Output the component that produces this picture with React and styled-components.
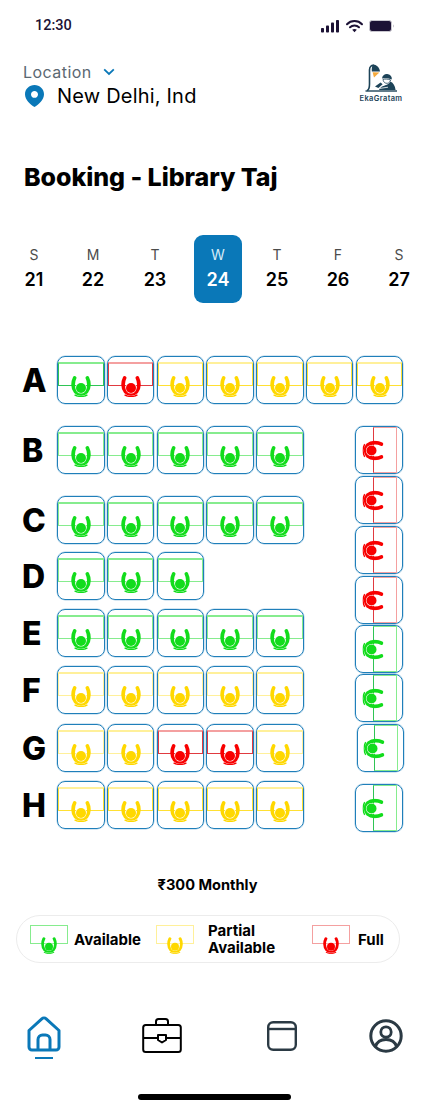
import React from 'react';
import styled, { createGlobalStyle } from 'styled-components';

const BLUE = '#0a78b8';

const COLORS = {
  green: { fill: '#12dc1c', strong: '#2fc455', light: '#86ec8e' },
  yellow: { fill: '#ffd800', strong: '#ffe033', light: '#fff09a' },
  red: { fill: '#f80000', strong: '#e03a40', light: '#f4a0a0' },
};

const GlobalStyle = createGlobalStyle`
  html, body {
    margin: 0;
    padding: 0;
    background: #fff;
  }
  body {
    font-family: 'Inter', 'Noto Sans', sans-serif;
    color: #000;
  }
`;

const Screen = styled.div`
  width: 430px;
  height: 1106px;
  overflow: hidden;
  display: flex;
  flex-direction: column;
  background: #fff;
`;

const StatusBar = styled.div`
  height: 50px;
  flex: none;
  display: flex;
  align-items: center;
  justify-content: space-between;
  padding: 1px 36px 0 35px;
  box-sizing: border-box;
`;

const Clock = styled.span`
  font-family: 'Roboto', sans-serif;
  font-size: 14.5px;
  font-weight: 500;
  color: #1c1235;
`;

const StatusIcons = styled.svg`
  display: block;
`;

const LocationHeader = styled.header`
  margin-top: 12px;
  padding: 0 27px 0 23px;
  display: flex;
  justify-content: space-between;
  align-items: flex-start;
`;

const LocationLabel = styled.div`
  height: 20px;
  display: flex;
  align-items: center;
  gap: 11px;
  font-size: 16px;
  letter-spacing: 0.45px;
  color: #5b6872;
`;

const LocationValue = styled.div`
  height: 28px;
  display: flex;
  align-items: center;
  gap: 13px;
  font-size: 20px;
  letter-spacing: 0.2px;
  margin-left: 2px;
`;

const Brand = styled.div`
  margin-top: 2px;
  width: 44px;
  display: flex;
  flex-direction: column;
  align-items: center;
`;

const BrandName = styled.span`
  font-size: 7.5px;
  font-weight: 600;
  letter-spacing: 0.35px;
  color: #1d4358;
  white-space: nowrap;
  margin-top: 2px;
`;

const Title = styled.h1`
  margin: 50px 0 0 24px;
  height: 34px;
  line-height: 34px;
  font-size: 25px;
  font-weight: 800;
  letter-spacing: -0.05px;
`;

const Calendar = styled.div`
  margin: 41px 0 0 3.5px;
  display: grid;
  grid-template-columns: 61px 57px 67px 59px 59px 63px 59px;
`;

const Day = styled.div`
  justify-self: center;
  width: 48px;
  height: 68px;
  border-radius: 9px;
  background: ${({ $active }) => ($active ? BLUE : 'transparent')};
  color: ${({ $active }) => ($active ? '#fff' : '#000')};
  display: flex;
  flex-direction: column;
  align-items: center;
  padding-top: 11px;
  box-sizing: border-box;
`;

const DayName = styled.span`
  font-size: 14px;
  line-height: 18px;
  color: ${({ $active }) => ($active ? '#d6ebf7' : '#4c4c4c')};
`;

const DayNumber = styled.span`
  font-size: 18px;
  line-height: 26px;
  margin-top: 3px;
  font-weight: 600;
`;

const SeatMap = styled.section`
  margin-top: 53px;
  padding-left: 22px;
  display: flex;
  flex-direction: column;
`;

const SeatRow = styled.div`
  display: flex;
  align-items: center;
  margin-top: ${({ $top }) => $top || 0}px;
`;

const RowLetter = styled.span`
  width: 35px;
  flex: none;
  font-size: 32px;
  line-height: 40px;
  font-weight: 800;
  padding-top: 2px;
`;

const Seats = styled.div`
  display: flex;
  gap: 2.3px;
`;

const LowerMap = styled.div`
  margin-top: 22px;
  display: flex;
`;

const LeftRows = styled.div`
  width: 333px;
  flex: none;
`;

const SideSeats = styled.div`
  display: flex;
  flex-direction: column;
`;

const SideSlot = styled.div`
  margin-top: ${({ $top }) => $top || 0}px;
  margin-left: ${({ $shift }) => $shift || 0}px;
`;

const SeatBox = styled.div`
  width: 47.5px;
  height: 48px;
  box-sizing: border-box;
  border: 1px solid #1f7fba;
  box-shadow: 0 0 0 0.5px rgba(42, 133, 189, 0.4);
  border-radius: 8px;
  display: flex;
  flex-direction: ${({ $side }) => ($side ? 'row' : 'column')};
  align-items: center;
  justify-content: ${({ $side }) => ($side ? 'flex-end' : 'flex-start')};
  padding: ${({ $side }) => ($side ? '0 5px 0 0' : '5px 0 0')};
`;

const Desk = styled.div`
  flex: none;
  box-sizing: border-box;
  border: 1px solid ${({ $color }) => $color.light};
  ${({ $legend, $side, $strong, $color }) => {
    if ($legend) return 'width: 38px; height: 19px;';
    if ($side) {
      return `width: 24px; height: 46px; border-left: 1px solid ${$color.strong};`;
    }
    return `
      width: 100%;
      height: 24px;
      border-top-width: 2px;
      ${$strong ? `border-color: ${$color.light} ${$color.strong} ${$color.strong};` : ''}
    `;
  }}
`;

const PersonSvg = styled.svg`
  flex: none;
  display: block;
  position: relative;
  z-index: 1;
  transform: ${({ $side }) => ($side ? 'rotate(90deg)' : 'none')};
  margin: ${({ $side }) => ($side ? '0 -10px 0 0' : '-10px 0 0')};
`;

const LegendPerson = styled(PersonSvg)`
  margin: -7px 0 0 11px;
`;

const Price = styled.div`
  margin-top: 43px;
  height: 20px;
  line-height: 20px;
  text-align: center;
  padding-right: 15px;
  font-size: 14.6px;
  font-weight: 700;
`;

const Legend = styled.div`
  margin: 20px 0 0 16px;
  width: 384px;
  height: 48px;
  box-sizing: border-box;
  border: 1px solid #ececec;
  border-radius: 24px;
  display: flex;
  align-items: flex-start;
`;

const LegendItem = styled.div`
  margin-left: ${({ $left }) => $left}px;
  margin-top: 9px;
  flex: none;
`;

const LegendLabel = styled.span`
  flex: none;
  margin-left: ${({ $left }) => $left}px;
  margin-top: ${({ $top }) => $top}px;
  font-size: 15px;
  line-height: 17px;
  font-weight: 700;
`;

const BottomNav = styled.nav`
  margin-top: 53px;
  height: 44px;
  padding-left: 27px;
  display: flex;
  align-items: flex-start;
`;

const NavButton = styled.div`
  flex: none;
  margin-left: ${({ $left }) => $left || 0}px;
  margin-top: ${({ $top }) => $top || 0}px;
  display: flex;
  flex-direction: column;
  align-items: center;
`;

const NavIcon = styled.svg`
  display: block;
`;

const ActiveMark = styled.span`
  width: 18px;
  height: 2px;
  margin-top: 5px;
  background: ${BLUE};
`;

const HomeBar = styled.div`
  width: 153px;
  height: 6px;
  margin: 34px 0 0 138px;
  border-radius: 3px;
  background: #000;
`;

const Person = ({ status, side, legend }) => {
  const color = COLORS[status].fill;
  const Svg = legend ? LegendPerson : PersonSvg;
  return (
    <Svg
      $side={side}
      width={legend ? 16 : 20}
      height={legend ? 17 : 21}
      viewBox="0 0 20 21"
      fill="none"
    >
      <path
        d="M3.6 2C1.6 6 1.4 12 4.4 15.6C7.4 18.6 12.6 18.6 15.6 15.6C18.6 12 18.4 6 16.4 2"
        stroke={color}
        strokeWidth="3.7"
        strokeLinecap="round"
      />
      <circle cx="10" cy="12" r="5.5" fill="#fff" />
      <circle cx="10" cy="12" r="5" fill={color} />
      <path d="M3.6 18.8C7.2 21 12.8 21 16.4 18.8" stroke={color} strokeWidth="1.4" />
    </Svg>
  );
};

const Seat = ({ status, side, strong }) => (
  <SeatBox $side={side}>
    {side && <Person status={status} side />}
    <Desk $color={COLORS[status]} $side={side} $strong={strong} />
    {!side && <Person status={status} />}
  </SeatBox>
);

const g = 'green';
const y = 'yellow';
const r = 'red';

const ROWS = [
  { letter: 'B', top: 0, seats: [g, g, g, g, g] },
  { letter: 'C', top: 22, seats: [g, g, g, g, g] },
  { letter: 'D', top: 8, seats: [g, g, g] },
  { letter: 'E', top: 9, seats: [g, g, g, g, g] },
  { letter: 'F', top: 9, seats: [y, y, y, y, y] },
  { letter: 'G', top: 10, seats: [y, y, r, r, y], strong: [2, 3] },
  { letter: 'H', top: 9, seats: [y, y, y, y, y], strong: [0, 1, 2, 3, 4] },
];

const SIDE = [
  { status: r, top: 0 },
  { status: r, top: 2 },
  { status: r, top: 2 },
  { status: r, top: 2 },
  { status: g, top: 1 },
  { status: g, top: 1 },
  { status: g, top: 2, shift: 1.5 },
  { status: g, top: 12 },
];

const DAYS = [
  ['S', 21],
  ['M', 22],
  ['T', 23],
  ['W', 24],
  ['T', 25],
  ['F', 26],
  ['S', 27],
];

const Logo = () => (
  <svg width="33" height="28" viewBox="0 0 33 28" fill="none">
    <path d="M2 26.5C4 26 4.5 24 4.5 20V6C4.5 2.5 6.5 1 9 1.5" stroke="#1d4358" strokeWidth="1.6" />
    <path d="M8 0.6C11.5 0.8 14.5 3.6 15 7.6L6.8 7.4C6.6 4.6 7 2 8 0.6Z" fill="#1d4358" />
    <path d="M7.6 8.2L14.4 8.4L9 13.4Z" fill="#f5a93c" />
    <path d="M17 14.4C17.4 11.2 20 9.6 23 10.2C26 11 27.4 13.4 26.6 15.6C24 14 20 14 17 14.4Z" fill="#1d4358" />
    <path d="M18 15.4C20 14.8 23.6 15 25.6 16C25 18.6 22.8 19.8 20.8 19.2C19.2 18.8 18.2 17.2 18 15.4Z" fill="#fff" stroke="#1d4358" strokeWidth="0.8" />
    <path d="M25.4 17.6C28.4 19 30 22 30.6 26H14C15 24 16.4 22.6 18.4 22C20.6 21.4 24.2 20.4 25.4 17.6Z" fill="#1d4358" />
    <path d="M10 22.6L15.6 18.6L17.6 20.2L13.4 24Z" fill="#1d4358" />
    <path d="M0.5 27H32" stroke="#1d4358" strokeWidth="1.4" />
    <path d="M15 24.4L23 23.2" stroke="#fff" strokeWidth="0.8" />
  </svg>
);

export default function App() {
  return (
    <Screen>
      <GlobalStyle />
      <StatusBar>
        <Clock>12:30</Clock>
        <StatusIcons width="73" height="14" viewBox="0 0 73 14" fill="none">
          <rect x="0" y="9" width="3" height="4.5" rx="0.8" fill="#1c1235" />
          <rect x="5" y="6.5" width="3" height="7" rx="0.8" fill="#1c1235" />
          <rect x="10" y="3.5" width="3" height="10" rx="0.8" fill="#1c1235" />
          <rect x="15" y="1" width="3" height="12.5" rx="0.8" fill="#1c1235" />
          <path d="M26 5.2C30 1 37 1 41 5.2" stroke="#1c1235" strokeWidth="2" strokeLinecap="round" />
          <path d="M29 8.2C31.4 5.8 35.6 5.8 38 8.2" stroke="#1c1235" strokeWidth="2" strokeLinecap="round" />
          <path d="M33.5 13.2L31.2 10.8C32.4 9.8 34.6 9.8 35.8 10.8Z" fill="#1c1235" />
          <rect x="48.5" y="1.5" width="22" height="11" rx="2.5" fill="#1c1235" stroke="#c9c7cf" />
          <path d="M72 5.5C72.8 5.8 73 6.4 73 7C73 7.6 72.8 8.2 72 8.5Z" fill="#c9c7cf" />
        </StatusIcons>
      </StatusBar>

      <LocationHeader>
        <div>
          <LocationLabel>
            Location
            <svg width="12" height="8" viewBox="0 0 12 8" fill="none">
              <path d="M1.2 1.4L6 6L10.8 1.4" stroke={BLUE} strokeWidth="1.8" />
            </svg>
          </LocationLabel>
          <LocationValue>
            <svg width="19" height="22" viewBox="0 0 19 22" fill="none">
              <path
                fillRule="evenodd"
                clipRule="evenodd"
                d="M9.5 0C14.7 0 19 4 19 9.2C19 14.6 13.8 19.6 9.5 22C5.2 19.6 0 14.6 0 9.2C0 4 4.3 0 9.5 0ZM9.5 6C7.6 6 6 7.5 6 9.4C6 11.3 7.6 12.8 9.5 12.8C11.4 12.8 13 11.3 13 9.4C13 7.5 11.4 6 9.5 6Z"
                fill={BLUE}
              />
            </svg>
            New Delhi, Ind
          </LocationValue>
        </div>
        <Brand>
          <Logo />
          <BrandName>EkaGratam</BrandName>
        </Brand>
      </LocationHeader>

      <Title>Booking - Library Taj</Title>

      <Calendar>
        {DAYS.map(([name, num]) => (
          <Day key={num} $active={num === 24}>
            <DayName $active={num === 24}>{name}</DayName>
            <DayNumber>{num}</DayNumber>
          </Day>
        ))}
      </Calendar>

      <SeatMap>
        <SeatRow>
          <RowLetter>A</RowLetter>
          <Seats>
            {[g, r, y, y, y, y, y].map((status, i) => (
              <Seat key={i} status={status} strong />
            ))}
          </Seats>
        </SeatRow>
        <LowerMap>
          <LeftRows>
            {ROWS.map((row) => (
              <SeatRow key={row.letter} $top={row.top}>
                <RowLetter>{row.letter}</RowLetter>
                <Seats>
                  {row.seats.map((status, i) => (
                    <Seat key={i} status={status} strong={row.strong && row.strong.includes(i)} />
                  ))}
                </Seats>
              </SeatRow>
            ))}
          </LeftRows>
          <SideSeats>
            {SIDE.map((seat, i) => (
              <SideSlot key={i} $top={seat.top} $shift={seat.shift}>
                <Seat status={seat.status} side />
              </SideSlot>
            ))}
          </SideSeats>
        </LowerMap>
      </SeatMap>

      <Price>₹300 Monthly</Price>

      <Legend>
        <LegendItem $left={13}>
          <Desk $color={{ light: COLORS.green.light }} $legend />
          <Person status={g} legend />
        </LegendItem>
        <LegendLabel $left={6} $top={15}>Available</LegendLabel>
        <LegendItem $left={15}>
          <Desk $color={{ light: COLORS.yellow.light }} $legend />
          <Person status={y} legend />
        </LegendItem>
        <LegendLabel $left={14} $top={6}>Partial<br />Available</LegendLabel>
        <LegendItem $left={37}>
          <Desk $color={{ light: COLORS.red.light }} $legend />
          <Person status={r} legend />
        </LegendItem>
        <LegendLabel $left={8} $top={15}>Full</LegendLabel>
      </Legend>

      <BottomNav>
        <NavButton>
          <NavIcon width="34" height="36" viewBox="0 0 34 36" fill="none">
            <path
              d="M2 14.5L14.8 2.8C16 1.7 18 1.7 19.2 2.8L32 14.5V31C32 32.7 30.7 34 29 34H5C3.3 34 2 32.7 2 31V14.5Z"
              stroke={BLUE}
              strokeWidth="3"
              strokeLinejoin="round"
            />
            <path
              d="M11 34V23.5C11 21 13 19 15.5 19H18.5C21 19 23 21 23 23.5V34"
              stroke={BLUE}
              strokeWidth="3"
            />
          </NavIcon>
          <ActiveMark />
        </NavButton>
        <NavButton $left={81} $top={2}>
          <NavIcon width="40" height="35" viewBox="0 0 40 35" fill="none">
            <rect x="1.2" y="7" width="37.6" height="27" rx="2.5" stroke="#000" strokeWidth="2" />
            <path d="M14 7V3.5C14 2 15 1 16.5 1H23.5C25 1 26 2 26 3.5V7" stroke="#000" strokeWidth="2" />
            <path d="M1.2 20H16M24 20H38.8" stroke="#000" strokeWidth="2" />
            <path d="M16 17H24V22L20 24.5L16 22V17Z" stroke="#000" strokeWidth="2" strokeLinejoin="round" />
          </NavIcon>
        </NavButton>
        <NavButton $left={85} $top={5}>
          <NavIcon width="30" height="30" viewBox="0 0 30 30" fill="none">
            <rect x="1.2" y="1.2" width="27.6" height="27.6" rx="5" stroke="#2b3a44" strokeWidth="2.4" />
            <path d="M1.2 8H28.8" stroke="#2b3a44" strokeWidth="2.4" />
          </NavIcon>
        </NavButton>
        <NavButton $left={72} $top={3}>
          <NavIcon width="34" height="34" viewBox="0 0 34 34" fill="none">
            <circle cx="17" cy="17" r="15.2" stroke="#2b3a44" strokeWidth="3" />
            <circle cx="17" cy="13" r="5.2" stroke="#2b3a44" strokeWidth="2.8" />
            <path d="M6.5 27.5C8 22.5 12 20.5 17 20.5C22 20.5 26 22.5 27.5 27.5" stroke="#2b3a44" strokeWidth="2.8" />
          </NavIcon>
        </NavButton>
      </BottomNav>

      <HomeBar />
    </Screen>
  );
}
